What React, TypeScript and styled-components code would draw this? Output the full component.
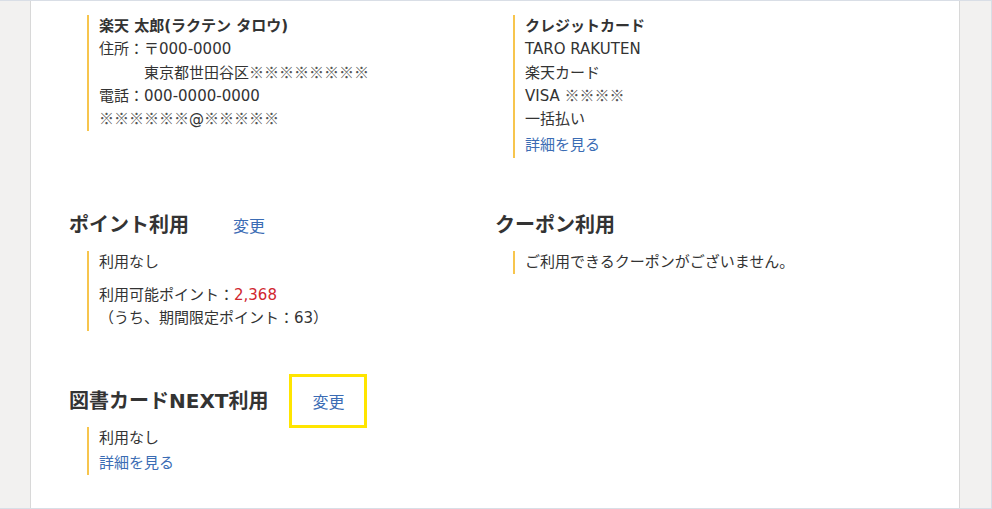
import React from "react";
import styled, { createGlobalStyle } from "styled-components";

const GlobalStyle = createGlobalStyle`
  html, body {
    margin: 0;
    padding: 0;
    background: #f2f1f0;
  }
  body {
    font-family: "DejaVu Sans", "Noto Sans CJK JP", sans-serif;
    color: #333;
  }
`;

const Frame = styled.div`
  box-sizing: border-box;
  width: 992px;
  height: 509px;
  overflow: hidden;
  display: flex;
  padding: 0 31px 0 30px;
  background: #f2f1f0;
  border-top: 1px solid #d9dee6;
  border-bottom: 1px solid #d9dee6;
  border-right: 1px solid #d9dee6;
`;

const Panel = styled.main`
  flex: 1;
  background: #fff;
  border-left: 1px solid #d8d8d8;
  border-right: 1px solid #d8d8d8;
  padding: 14px 0 0 38px;
`;

const Row = styled.div<{ $after: number }>`
  display: grid;
  grid-template-columns: 426px 1fr;
  margin-bottom: ${(p) => p.$after}px;
`;

const Column = styled.section``;

const HeadRow = styled.div`
  display: flex;
  align-items: center;
  height: 52px;
`;

const Heading = styled.h2`
  margin: 0;
  font-size: 20px;
  line-height: 28px;
  font-weight: 700;
  color: #333;
`;

const ChangeLink = styled.a<{ $focused?: boolean }>`
  display: inline-block;
  flex: none;
  margin-left: 21px;
  padding: 12px 20px;
  font-family: "Noto Sans CJK JP", sans-serif;
  font-size: 16px;
  line-height: 24px;
  color: #3b6cb4;
  text-decoration: none;
  cursor: pointer;
  border: 3px solid ${(p) => (p.$focused ? "#ffe500" : "transparent")};
`;

const Body = styled.div`
  margin-left: 18px;
  padding-left: 10px;
  border-left: 2px solid #f7c54d;
  font-size: 15px;
  line-height: 23.3px;
`;

const Line = styled.div<{ $indent?: boolean; $bold?: boolean; $gap?: number }>`
  height: 23.3px;
  padding-left: ${(p) => (p.$indent ? "3em" : "0")};
  font-weight: ${(p) => (p.$bold ? 700 : 400)};
  margin-top: ${(p) => p.$gap ?? 0}px;
  white-space: nowrap;
`;

/* reference marks are set full width, as in the CJK face */
const Mask = styled.span`
  font-family: "Noto Sans CJK JP", sans-serif;
  line-height: 1;
  color: #555;
`;

const MoreLink = styled.a<{ $gap?: number }>`
  display: block;
  margin-top: ${(p) => p.$gap ?? 0}px;
  color: #3b6cb4;
  text-decoration: none;
  cursor: pointer;
`;

const Points = styled.span`
  color: #d0262e;
`;

export default function App() {
  return (
    <>
      <GlobalStyle />
      <Frame>
        <Panel>
          <Row $after={41}>
            <Column>
              <Body>
                <Line $bold>楽天 太郎(ラクテン タロウ)</Line>
                <Line>住所：〒000-0000</Line>
                <Line $indent>
                  東京都世田谷区<Mask>※※※※※※※※</Mask>
                </Line>
                <Line>電話：000-0000-0000</Line>
                <Line>
                  <Mask>※※※※※※</Mask>@<Mask>※※※※※</Mask>
                </Line>
              </Body>
            </Column>
            <Column>
              <Body>
                <Line $bold>クレジットカード</Line>
                <Line>TARO RAKUTEN</Line>
                <Line>楽天カード</Line>
                <Line>
                  VISA <Mask>※※※※</Mask>
                </Line>
                <Line>一括払い</Line>
                <MoreLink $gap={3}>詳細を見る</MoreLink>
              </Body>
            </Column>
          </Row>

          <Row $after={44}>
            <Column>
              <HeadRow>
                <Heading>ポイント利用</Heading>
                <ChangeLink>変更</ChangeLink>
              </HeadRow>
              <Body>
                <Line>利用なし</Line>
                <Line $gap={10}>
                  利用可能ポイント：<Points>2,368</Points>
                </Line>
                <Line>（うち、期間限定ポイント：63）</Line>
              </Body>
            </Column>
            <Column>
              <HeadRow>
                <Heading>クーポン利用</Heading>
              </HeadRow>
              <Body>
                <Line>ご利用できるクーポンがございません。</Line>
              </Body>
            </Column>
          </Row>

          <Row $after={0}>
            <Column>
              <HeadRow>
                <Heading>図書カードNEXT利用</Heading>
                <ChangeLink $focused>変更</ChangeLink>
              </HeadRow>
              <Body>
                <Line>利用なし</Line>
                <MoreLink $gap={2}>詳細を見る</MoreLink>
              </Body>
            </Column>
          </Row>
        </Panel>
      </Frame>
    </>
  );
}
